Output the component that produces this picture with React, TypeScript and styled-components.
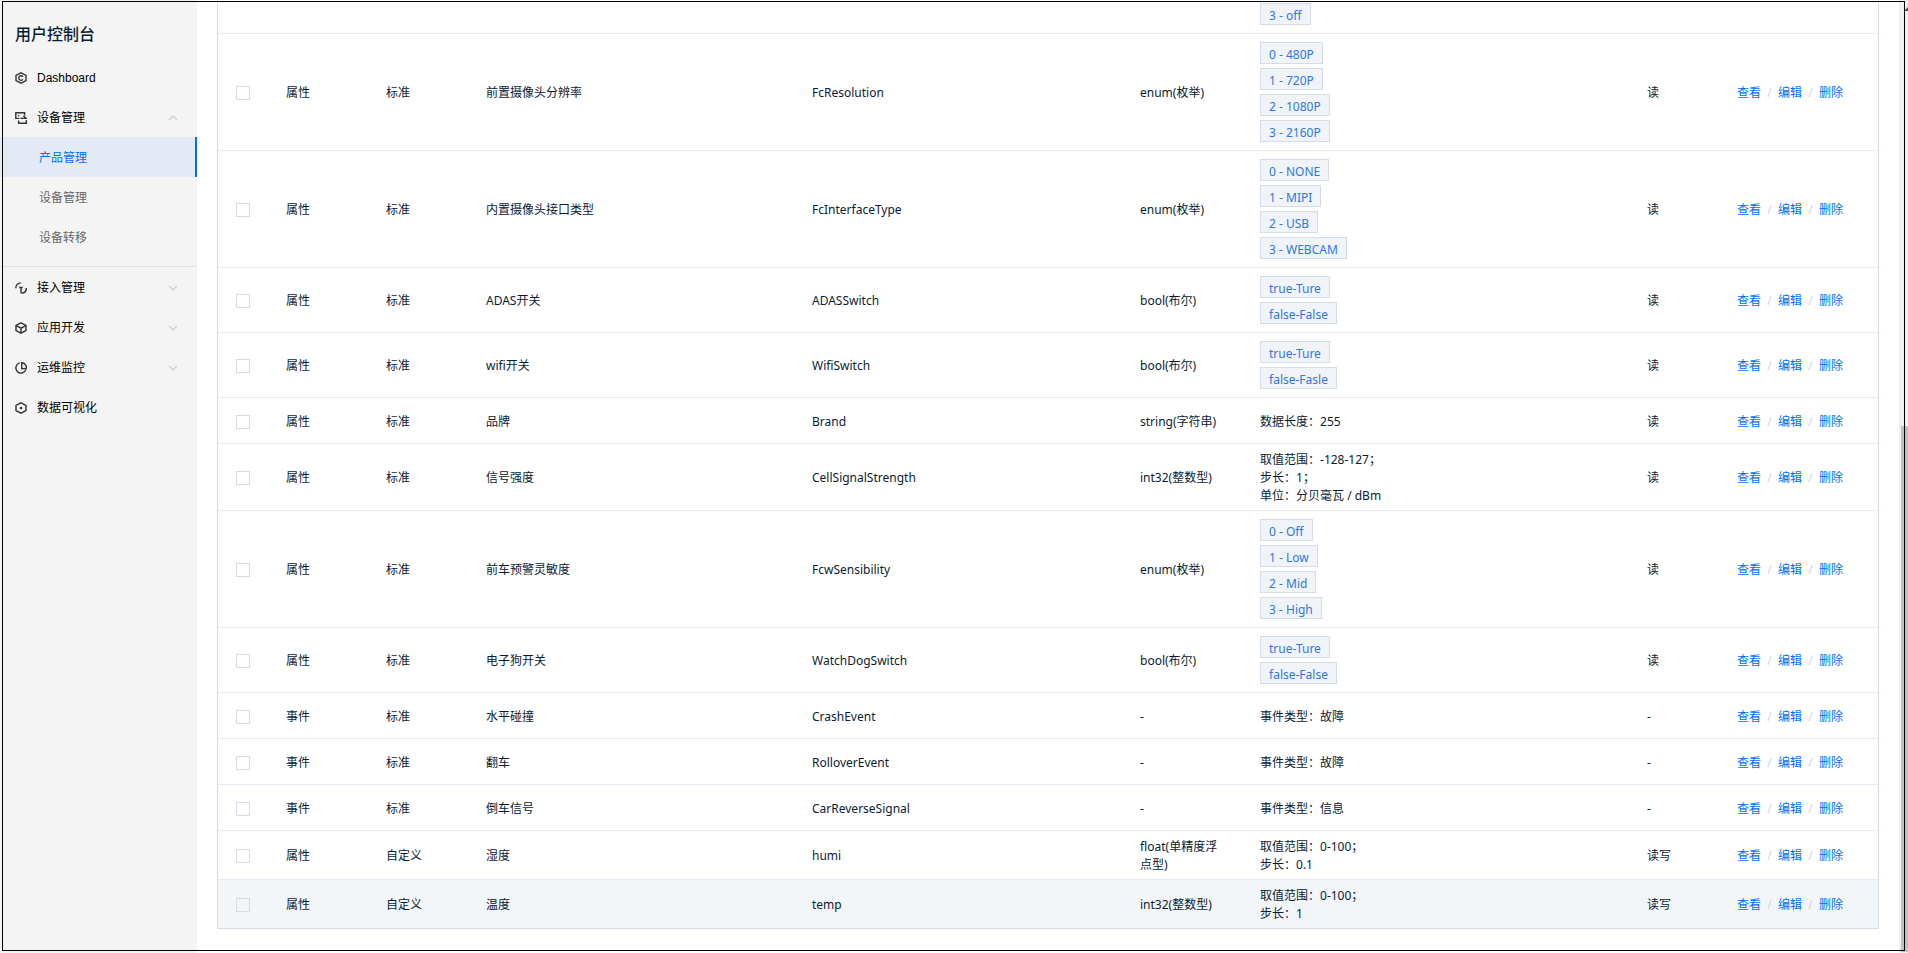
import React from "react";
import styled, { createGlobalStyle } from "styled-components";

const GlobalStyle = createGlobalStyle`
  *, *::before, *::after { box-sizing: border-box; }
  body {
    margin: 0;
    background: #fff;
    color: #0b1b34;
    font-family: "Noto Sans", "Noto Sans CJK SC", sans-serif;
    font-size: 12px;
    line-height: 18px;
  }
`;

const Page = styled.div`
  display: flex;
  height: 100vh;
  overflow: hidden;
  position: relative;
`;

const Frame = styled.div`
  position: absolute;
  inset: 1px 3px 2px 2px;
  border: 1px solid #000;
  pointer-events: none;
`;

const Sidebar = styled.aside`
  flex: 0 0 197px;
  background: #f4f4f4;
  color: #000;
  font-family: "Liberation Sans", "Noto Sans CJK SC", sans-serif;
`;

const Title = styled.h1`
  margin: 0;
  padding: 23px 15px 10px;
  font-size: 16px;
  line-height: 24px;
  font-weight: 500;
  color: #0b1b34;
`;

const MenuItem = styled.button`
  display: flex;
  align-items: center;
  width: 100%;
  height: 40px;
  padding: 2px 19px 0 15px;
  border: 0;
  background: none;
  color: inherit;
  font: inherit;
  text-align: left;
  cursor: pointer;

  svg { flex: none; }
`;

const MenuLabel = styled.span`
  flex: 1;
  margin-left: 10px;
`;

const SubMenu = styled.nav`
  padding-bottom: 9px;
  border-bottom: 1px solid #dbe2ee;
`;

const SubLink = styled.a<{ $active?: boolean }>`
  display: block;
  height: 40px;
  padding-left: 39px;
  line-height: 42px;
  text-decoration: none;
  color: ${(p) => (p.$active ? "#006eff" : "#666")};
  background: ${(p) => (p.$active ? "#e3eaf5" : "transparent")};
  border-right: 2px solid ${(p) => (p.$active ? "#006eff" : "transparent")};
`;

const Main = styled.main`
  flex: 1;
  min-width: 0;
  padding: 0 20px;
  overflow: hidden;
`;

const Table = styled.table`
  width: 100%;
  table-layout: fixed;
  border-collapse: separate;
  border-spacing: 0;
  border: 1px solid #d4dce6;
  border-top: 0;
`;

const Col = styled.col<{ $w?: number }>`
  width: ${(p) => (p.$w ? `${p.$w}px` : "auto")};
`;

const Row = styled.tr<{ $hover?: boolean }>`
  background: ${(p) => (p.$hover ? "#f2f6f9" : "#fff")};

  &:not(:last-child) td { border-bottom: 1px solid #e3eaf4; }
`;

const Cell = styled.td`
  height: 46px;
  padding: 7px 24px 5px 10px;
  vertical-align: middle;
`;

const CheckCell = styled(Cell)`
  padding: 2px 0 0 18px;
`;

const ActionCell = styled(Cell)`
  padding-right: 0;
  white-space: nowrap;
`;

const TailCell = styled.td`
  padding: 2px 10px 5px;
`;

const Check = styled.input`
  appearance: none;
  display: block;
  width: 14px;
  height: 14px;
  margin: 0;
  border: 1px solid #d4dce6;
`;

const Tags = styled.div`
  display: flex;
  flex-direction: column;
  align-items: flex-start;
  gap: 4px;
  padding: 1px 0 3px;
`;

const Tag = styled.span`
  height: 22px;
  padding: 0 8px;
  border: 1px solid #d4dce6;
  background: #f0f3f8;
  color: #2f77e6;
  line-height: 24px;
`;

const Line = styled.div``;

const Actions = styled.div`
  display: flex;
`;

const Action = styled.a`
  color: #006eff;
  text-decoration: none;

  & + &::before {
    content: "/";
    display: inline-block;
    width: 17px;
    text-align: center;
    color: #cfd5de;
  }
`;

const ScrollTrack = styled.div`
  flex: 0 0 9px;
  display: flex;
  flex-direction: column;
  justify-content: flex-end;
  padding: 0 0 1px 2px;
  background: #f1f1f1;
`;

const ScrollArrow = styled.svg`
  align-self: flex-end;
  margin-bottom: auto;
`;

const ScrollThumb = styled.div`
  height: calc(55% + 2px);
  background: #c1c1c1;
`;

const icons: Record<string, React.ReactNode> = {
  dashboard: (
    <>
      <path d="M6 .8 11 3.4V8.6L6 11.2 1 8.6V3.4Z" />
      <path d="M7.9 4.6A2.3 2.3 0 1 0 7.9 7.4" />
    </>
  ),
  device: (
    <>
      <path d="M9.6 3.4V.8H.8V6.4H4.4M3 3.6H4.2" />
      <path d="M3.6 8.4V11.3H11.3V8M5.4 6.4H11.2L8.4 3.8" />
    </>
  ),
  access: (
    <>
      <path d="M.8 6.2C.8 3 3 .9 6 .9M6.6 11.2C9.4 11 11.4 9 11.4 6" />
      <path d="M4.2 5.5H7.8M6 5.5V11.2" />
    </>
  ),
  app: (
    <>
      <path d="M6 .8 11 3.4V8.6L6 11.2 1 8.6V3.4Z" />
      <path d="M1.2 3.6 6 6.2 10.8 3.6M6 6.2V11" />
    </>
  ),
  monitor: (
    <>
      <path d="M4.7.9A5.2 5.2 0 1 0 11 7.6" />
      <path d="M6.7 .8A4.6 4.6 0 0 1 11.2 6.6H6.7Z" />
    </>
  ),
  visual: (
    <>
      <path d="M6 .8 11 3.4V8.6L6 11.2 1 8.6V3.4Z" />
      <circle cx="6" cy="6" r=".6" fill="currentColor" />
    </>
  ),
};

const Icon = ({ name }: { name: string }) => (
  <svg width="12" height="12" viewBox="0 0 12 12" fill="none" stroke="#333" strokeWidth="1.4" aria-hidden="true">
    {icons[name]}
  </svg>
);

const Chevron = ({ up }: { up?: boolean }) => (
  <svg width="10" height="6" viewBox="0 0 10 6" fill="none" stroke="#ccc" strokeWidth="1.2" aria-hidden="true">
    <path d={up ? "M1 5 5 1 9 5" : "M1 1 5 5 9 1"} />
  </svg>
);

type Item = {
  kind: string;
  source: string;
  name: string;
  id: string;
  type: string;
  tags?: string[];
  lines?: string[];
  access: string;
};

const prop = (name: string, id: string, type: string, rest: Partial<Item>): Item => ({
  kind: "属性", source: "标准", name, id, type, access: "读", ...rest,
});
const event = (name: string, id: string, level: string): Item => ({
  kind: "事件", source: "标准", name, id, type: "-", lines: [`事件类型：${level}`], access: "-",
});

const items: Item[] = [
  prop("前置摄像头分辨率", "FcResolution", "enum(枚举)", { tags: ["0 - 480P", "1 - 720P", "2 - 1080P", "3 - 2160P"] }),
  prop("内置摄像头接口类型", "FcInterfaceType", "enum(枚举)", { tags: ["0 - NONE", "1 - MIPI", "2 - USB", "3 - WEBCAM"] }),
  prop("ADAS开关", "ADASSwitch", "bool(布尔)", { tags: ["true-Ture", "false-False"] }),
  prop("wifi开关", "WifiSwitch", "bool(布尔)", { tags: ["true-Ture", "false-Fasle"] }),
  prop("品牌", "Brand", "string(字符串)", { lines: ["数据长度：255"] }),
  prop("信号强度", "CellSignalStrength", "int32(整数型)", { lines: ["取值范围：-128-127；", "步长：1；", "单位：分贝毫瓦 / dBm"] }),
  prop("前车预警灵敏度", "FcwSensibility", "enum(枚举)", { tags: ["0 - Off", "1 - Low", "2 - Mid", "3 - High"] }),
  prop("电子狗开关", "WatchDogSwitch", "bool(布尔)", { tags: ["true-Ture", "false-False"] }),
  event("水平碰撞", "CrashEvent", "故障"),
  event("翻车", "RolloverEvent", "故障"),
  event("倒车信号", "CarReverseSignal", "信息"),
  prop("湿度", "humi", "float(单精度浮点型)", { source: "自定义", lines: ["取值范围：0-100；", "步长：0.1"], access: "读写" }),
  prop("温度", "temp", "int32(整数型)", { source: "自定义", lines: ["取值范围：0-100；", "步长：1"], access: "读写" }),
];

export default function App() {
  return (
    <Page>
      <GlobalStyle />
      <Sidebar>
        <Title>用户控制台</Title>
        <MenuItem><Icon name="dashboard" /><MenuLabel>Dashboard</MenuLabel></MenuItem>
        <MenuItem><Icon name="device" /><MenuLabel>设备管理</MenuLabel><Chevron up /></MenuItem>
        <SubMenu>
          <SubLink href="#product" $active>产品管理</SubLink>
          <SubLink href="#device">设备管理</SubLink>
          <SubLink href="#transfer">设备转移</SubLink>
        </SubMenu>
        <MenuItem><Icon name="access" /><MenuLabel>接入管理</MenuLabel><Chevron /></MenuItem>
        <MenuItem><Icon name="app" /><MenuLabel>应用开发</MenuLabel><Chevron /></MenuItem>
        <MenuItem><Icon name="monitor" /><MenuLabel>运维监控</MenuLabel><Chevron /></MenuItem>
        <MenuItem><Icon name="visual" /><MenuLabel>数据可视化</MenuLabel></MenuItem>
      </Sidebar>
      <Main>
        <Table>
          <colgroup>
            <Col $w={58} /><Col $w={100} /><Col $w={100} /><Col $w={326} /><Col $w={328} />
            <Col $w={120} /><Col /><Col $w={90} /><Col $w={151} />
          </colgroup>
          <tbody>
            <Row>
              <TailCell colSpan={6} />
              <TailCell><Tags><Tag>3 - off</Tag></Tags></TailCell>
              <TailCell colSpan={2} />
            </Row>
            {items.map((item, i) => (
              <Row key={item.id} $hover={i === items.length - 1}>
                <CheckCell><Check type="checkbox" aria-label={item.name} /></CheckCell>
                <Cell>{item.kind}</Cell>
                <Cell>{item.source}</Cell>
                <Cell>{item.name}</Cell>
                <Cell>{item.id}</Cell>
                <Cell>{item.type}</Cell>
                <Cell>
                  {item.tags && <Tags>{item.tags.map((t) => <Tag key={t}>{t}</Tag>)}</Tags>}
                  {item.lines?.map((l) => <Line key={l}>{l}</Line>)}
                </Cell>
                <Cell>{item.access}</Cell>
                <ActionCell>
                  <Actions>
                    <Action href="#view">查看</Action>
                    <Action href="#edit">编辑</Action>
                    <Action href="#delete">删除</Action>
                  </Actions>
                </ActionCell>
              </Row>
            ))}
          </tbody>
        </Table>
      </Main>
      <ScrollTrack>
        <ScrollArrow width="4" height="12" viewBox="0 0 4 12" aria-hidden="true">
          <path d="M0 11 4 7V11Z" fill="#505050" />
        </ScrollArrow>
        <ScrollThumb />
      </ScrollTrack>
      <Frame />
    </Page>
  );
}
